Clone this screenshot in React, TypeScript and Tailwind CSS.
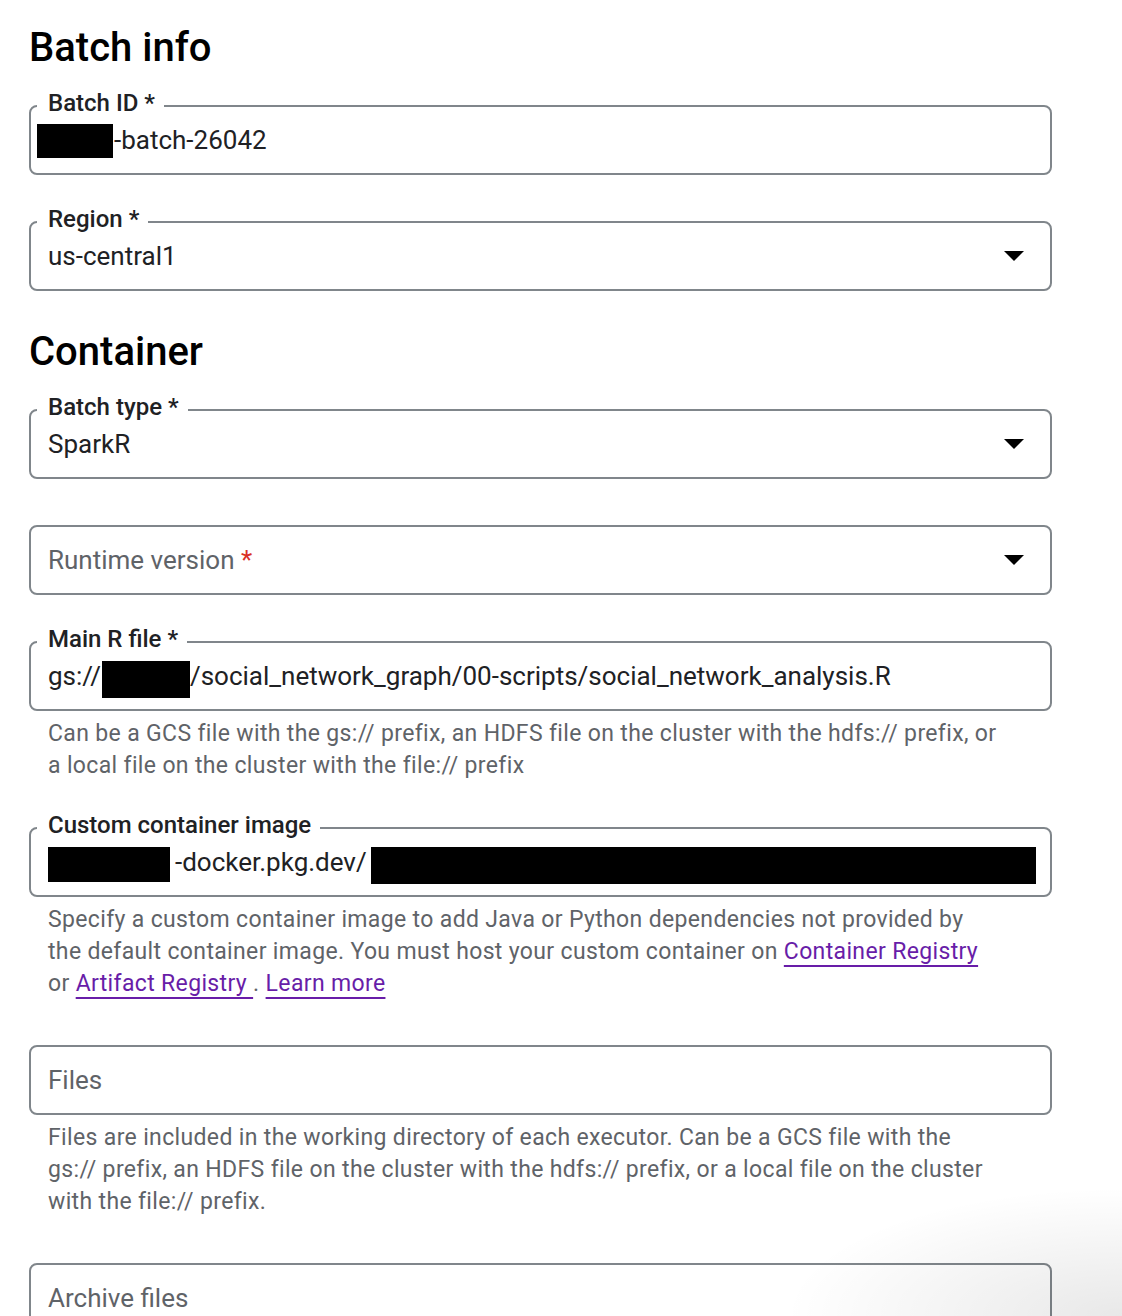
import React from 'react';

interface FieldProps {
  label?: string;
  placeholder?: string;
  required?: boolean;
  dropdown?: boolean;
  helper?: React.ReactNode;
  children?: React.ReactNode;
  last?: boolean;
}

const Caret = () => (
  <svg width="20" height="10" viewBox="0 0 20 10" className="shrink-0">
    <path d="M0 0 L20 0 L10 10 Z" fill="#000" />
  </svg>
);

const Field: React.FC<FieldProps> = ({ label, placeholder, required, dropdown, helper, children, last }) => (
  <div className={last ? '' : helper ? 'mb-[45px]' : 'mb-[46px]'}>
    <div className="relative h-[70px] rounded-lg border-2 border-[#80868b] flex items-center pl-[17px] pr-[26px]">
      {label && (
        <span className="absolute -top-[17px] left-[6px] bg-white pl-[11px] pr-[9px] text-[24px] leading-[26px] font-medium text-[#202124]">
          {label}
        </span>
      )}
      <div className="flex-1 flex items-center whitespace-nowrap text-[26px] leading-[36px] text-[#202124]">
        {children}
        {placeholder && (
          <span className="text-[#5f6368]">
            {placeholder}
            {required && <span className="text-[#d93025]"> *</span>}
          </span>
        )}
      </div>
      {dropdown && <Caret />}
    </div>
    {helper && (
      <p className="mt-[7px] pl-[19px] pr-[53px] text-[23px] leading-[32px] tracking-[0.35px] text-[#5f6368]">
        {helper}
      </p>
    )}
  </div>
);

const Redact: React.FC<{ className: string }> = ({ className }) => (
  <span className={`inline-block bg-black shrink-0 ${className}`} />
);

const Link: React.FC<{ children: React.ReactNode }> = ({ children }) => (
  <a className="text-[#681da8] underline decoration-2 underline-offset-[6px] decoration-[#681da8]">{children}</a>
);

export default function App() {
  return (
    <div className="relative h-[1316px] overflow-hidden bg-white font-['Roboto',sans-serif] pl-[29px] pt-[24px]">
      <div className="w-[1023px]">
        <h2 className="text-[40px] leading-[48px] font-medium text-[#000] mb-[33px]">Batch info</h2>
        <Field label="Batch ID *">
          <Redact className="-ml-[11px] w-[76px] h-[34px] mt-[1px]" />
          <span className="ml-[1px]">-batch-26042</span>
        </Field>
        <Field label="Region *" dropdown last>
          us-central1
        </Field>

        <h2 className="mt-[37px] text-[40px] leading-[48px] font-medium text-[#000] mb-[33px]">Container</h2>
        <Field label="Batch type *" dropdown>
          SparkR
        </Field>
        <Field placeholder="Runtime version" required dropdown />
        <Field
          label="Main R file *"
          helper="Can be a GCS file with the gs:// prefix, an HDFS file on the cluster with the hdfs:// prefix, or a local file on the cluster with the file:// prefix"
        >
          <span>gs://</span>
          <Redact className="w-[88px] h-[37px] ml-[1px] mt-[6px]" />
          <span>/social_network_graph/00-scripts/social_network_analysis.R</span>
        </Field>
        <Field
          label="Custom container image"
          helper={
            <>
              Specify a custom container image to add Java or Python dependencies not provided by the default
              container image. You must host your custom container on <Link>Container Registry</Link> or{' '}
              <Link>Artifact Registry </Link> . <Link>Learn more</Link>
            </>
          }
        >
          <Redact className="w-[122px] h-[35px] mt-[5px]" />
          <span className="ml-[5px]">-docker.pkg.dev/</span>
          <Redact className="ml-[4px] w-[665px] h-[37px] mt-[7px]" />
        </Field>
        <Field
          placeholder="Files"
          helper="Files are included in the working directory of each executor. Can be a GCS file with the gs:// prefix, an HDFS file on the cluster with the hdfs:// prefix, or a local file on the cluster with the file:// prefix."
        />
        <Field placeholder="Archive files" last />
      </div>
      <div className="pointer-events-none absolute right-0 bottom-0 w-[340px] h-[130px] bg-[radial-gradient(ellipse_at_bottom_right,rgba(0,0,0,0.09),rgba(0,0,0,0)_70%)]" />
    </div>
  );
}
